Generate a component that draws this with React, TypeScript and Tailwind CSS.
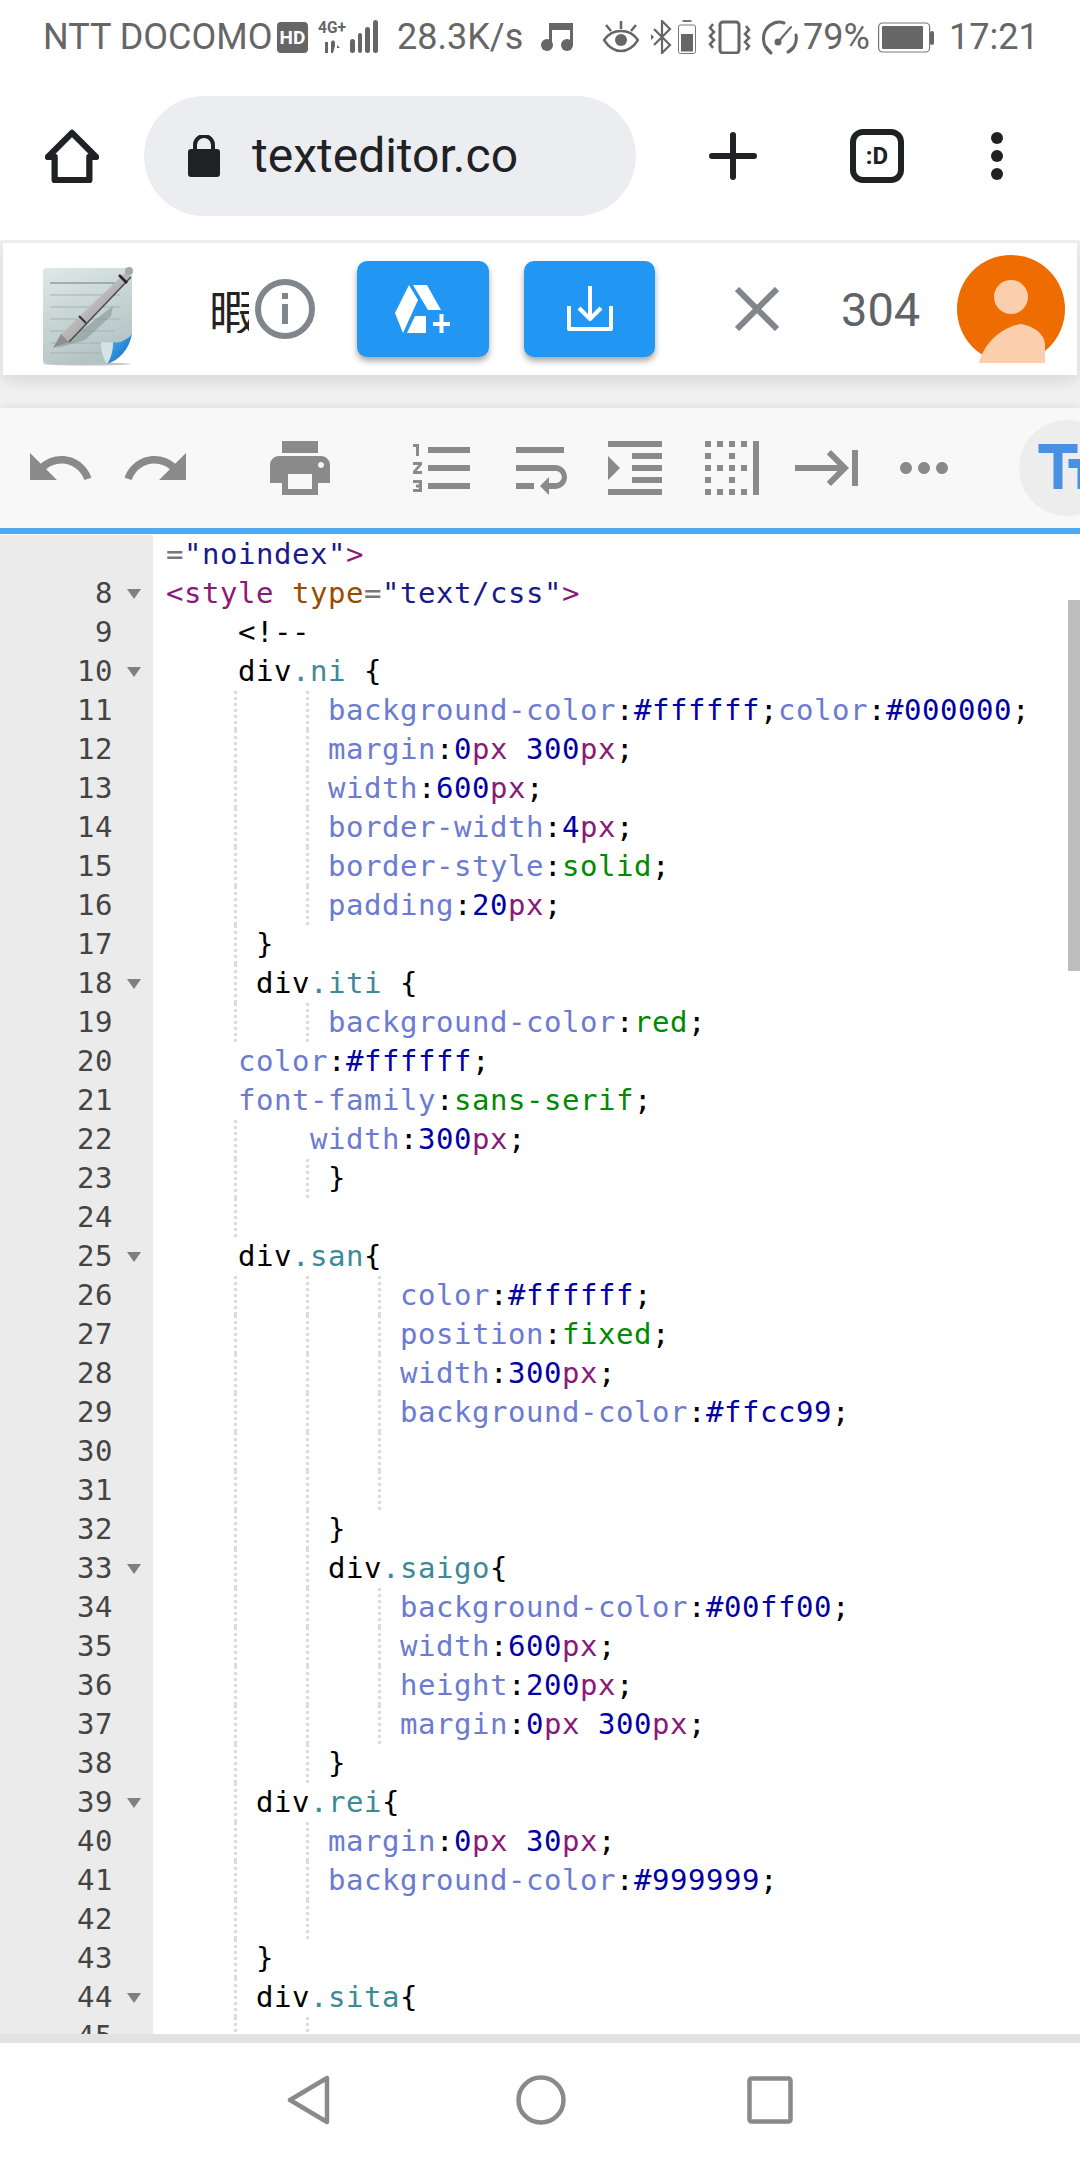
const tone = {
  t: "text-black",
  p: "text-[#6b7bd2]",
  n: "text-[#0000a6]",
  u: "text-[#881a78]",
  g: "text-[#008a00]",
  c: "text-[#3c8a98]",
  m: "text-[#8a1a7a]",
  a: "text-[#994c00]",
  s: "text-[#1a1a8c]",
  e: "text-[#777777]",
}

type Tok = [keyof typeof tone, string]

type Line = {
  num?: number
  fold?: boolean
  guides?: number[]
  toks?: Tok[]
}

const sp = (n: number) => " ".repeat(n)

// prop:value; with the usual colours
function decl(indent: number, prop: string, ...val: Tok[]): Tok[] {
  return [["t", sp(indent)], ["p", prop], ["t", ":"], ...val, ["t", ";"]]
}

function sel(indent: number, cls: string, tail = "{"): Tok[] {
  return [["t", sp(indent) + "div"], ["c", "." + cls], ["t", tail]]
}

const lines: Line[] = [
  { toks: [["e", "="], ["s", '"noindex"'], ["m", ">"]] },
  { num: 8, fold: true, toks: [["m", "<style"], ["t", " "], ["a", "type"], ["e", "="], ["s", '"text/css"'], ["m", ">"]] },
  { num: 9, toks: [["t", sp(4) + "<!--"]] },
  { num: 10, fold: true, toks: sel(4, "ni", " {") },
  { num: 11, guides: [4, 8], toks: [...decl(9, "background-color", ["n", "#ffffff"]), ["p", "color"], ["t", ":"], ["n", "#000000"], ["t", ";"]] },
  { num: 12, guides: [4, 8], toks: decl(9, "margin", ["n", "0"], ["u", "px"], ["t", " "], ["n", "300"], ["u", "px"]) },
  { num: 13, guides: [4, 8], toks: decl(9, "width", ["n", "600"], ["u", "px"]) },
  { num: 14, guides: [4, 8], toks: decl(9, "border-width", ["n", "4"], ["u", "px"]) },
  { num: 15, guides: [4, 8], toks: decl(9, "border-style", ["g", "solid"]) },
  { num: 16, guides: [4, 8], toks: decl(9, "padding", ["n", "20"], ["u", "px"]) },
  { num: 17, guides: [4], toks: [["t", sp(5) + "}"]] },
  { num: 18, fold: true, guides: [4], toks: sel(5, "iti", " {") },
  { num: 19, guides: [4, 8], toks: decl(9, "background-color", ["g", "red"]) },
  { num: 20, toks: decl(4, "color", ["n", "#ffffff"]) },
  { num: 21, toks: decl(4, "font-family", ["g", "sans-serif"]) },
  { num: 22, guides: [4], toks: decl(8, "width", ["n", "300"], ["u", "px"]) },
  { num: 23, guides: [4, 8], toks: [["t", sp(9) + "}"]] },
  { num: 24, guides: [4] },
  { num: 25, fold: true, toks: sel(4, "san") },
  { num: 26, guides: [4, 8, 12], toks: decl(13, "color", ["n", "#ffffff"]) },
  { num: 27, guides: [4, 8, 12], toks: decl(13, "position", ["g", "fixed"]) },
  { num: 28, guides: [4, 8, 12], toks: decl(13, "width", ["n", "300"], ["u", "px"]) },
  { num: 29, guides: [4, 8, 12], toks: decl(13, "background-color", ["n", "#ffcc99"]) },
  { num: 30, guides: [4, 8, 12] },
  { num: 31, guides: [4, 8, 12] },
  { num: 32, guides: [4, 8], toks: [["t", sp(9) + "}"]] },
  { num: 33, fold: true, guides: [4, 8], toks: sel(9, "saigo") },
  { num: 34, guides: [4, 8, 12], toks: decl(13, "background-color", ["n", "#00ff00"]) },
  { num: 35, guides: [4, 8, 12], toks: decl(13, "width", ["n", "600"], ["u", "px"]) },
  { num: 36, guides: [4, 8, 12], toks: decl(13, "height", ["n", "200"], ["u", "px"]) },
  { num: 37, guides: [4, 8, 12], toks: decl(13, "margin", ["n", "0"], ["u", "px"], ["t", " "], ["n", "300"], ["u", "px"]) },
  { num: 38, guides: [4, 8], toks: [["t", sp(9) + "}"]] },
  { num: 39, fold: true, guides: [4], toks: sel(5, "rei") },
  { num: 40, guides: [4, 8], toks: decl(9, "margin", ["n", "0"], ["u", "px"], ["t", " "], ["n", "30"], ["u", "px"]) },
  { num: 41, guides: [4, 8], toks: decl(9, "background-color", ["n", "#999999"]) },
  { num: 42, guides: [4, 8] },
  { num: 43, guides: [4], toks: [["t", sp(5) + "}"]] },
  { num: 44, fold: true, guides: [4], toks: sel(5, "sita") },
  { num: 45, guides: [4, 8] },
]

const guideLeft: Record<number, string> = {
  4: "left-[68px]",
  8: "left-[140px]",
  12: "left-[212px]",
}

function MaterialIcon({ d, className }: { d: string; className: string }) {
  return (
    <svg viewBox="0 0 24 24" className={className} fill="currentColor">
      <path d={d} />
    </svg>
  )
}

function StatusBar() {
  return (
    <div className="flex h-[60px] shrink-0 items-center pt-[14px] text-[36px] text-[#666666]">
      <span className="ml-[43px] w-[234px] shrink-0 leading-none">NTT DOCOMO</span>
      <div className="flex h-[31px] w-[31px] shrink-0 items-center justify-center rounded-[4px] bg-[#666666] text-[19px] font-bold leading-none text-white">
        HD
      </div>
      {/* 4G+ and signal bars */}
      <svg width="62" height="34" viewBox="0 0 62 34" className="ml-[9px] shrink-0" fill="#666666">
        <text x="1" y="13" fontSize="17" fontWeight="700" fontFamily="Roboto" textLength="28" lengthAdjust="spacingAndGlyphs">4G+</text>
        <path d="M8 22h3v11H8zM14 22l2-2 2 2v4l-2 7h-2zM20 25l3 3h-3z" />
        <rect x="33" y="19" width="5" height="14" rx="2.5" />
        <rect x="41" y="13" width="4" height="20" rx="2" />
        <rect x="48" y="7" width="5" height="26" rx="2.5" />
        <rect x="56" y="0" width="5" height="33" rx="2.5" />
      </svg>
      <span className="ml-[18px] w-[123px] shrink-0 leading-none">28.3K/s</span>
      {/* music */}
      <svg width="32" height="28" viewBox="0 0 32 28" className="ml-[21px] shrink-0" fill="#666666">
        <path d="M8 0h24v22h-3V7H11v15H8z" />
        <circle cx="6" cy="22" r="6" />
        <circle cx="26" cy="22" r="6" />
      </svg>
      {/* eye */}
      <svg width="36" height="32" viewBox="0 0 36 32" className="ml-[30px] shrink-0" fill="none" stroke="#666666" strokeWidth="2.5">
        <path d="M1 19c5-7 10-9 17-9s12 2 17 9c-5 8-10 11-17 11S6 27 1 19z" />
        <circle cx="18" cy="19" r="6" fill="#666666" stroke="none" />
        <path d="M18 0v8M3 4l5 6M33 4l-5 6" />
      </svg>
      {/* bluetooth */}
      <svg width="22" height="34" viewBox="0 0 22 34" className="ml-[12px] shrink-0" fill="none" stroke="#666666" strokeWidth="2.2">
        <path d="M3 9l16 16-8 8V1l8 8L3 25" />
        <path d="M0 14l3 3-3 3z" fill="#666666" stroke="none" />
      </svg>
      {/* tiny battery */}
      <svg width="18" height="34" viewBox="0 0 18 34" className="ml-[5px] shrink-0" fill="none" stroke="#777777" strokeWidth="1">
        <rect x="5" y="0.5" width="8" height="1" fill="#666666" />
        <rect x="0.5" y="5" width="17" height="28.5" rx="2" />
        <rect x="3" y="14" width="12" height="17.5" fill="#666666" stroke="none" />
      </svg>
      {/* vibrate */}
      <svg width="43" height="34" viewBox="0 0 43 34" className="ml-[12px] shrink-0" fill="none" stroke="#666666">
        <rect x="12" y="2" width="19" height="31" rx="3" strokeWidth="3" />
        <path d="M5 4l-3 4 4 4-4 4 4 4-4 4 3 4M38 6l3 4-4 4 4 4-4 4 4 4-3 4" strokeWidth="2.5" />
      </svg>
      {/* speedometer */}
      <svg width="37" height="36" viewBox="0 0 37 36" className="ml-[10px] shrink-0" fill="none" stroke="#666666" strokeWidth="3" strokeLinecap="round">
        <path d="M9 33C1 27 0 14 8 7c5-4 10-5 15-3M29 32c5-4 7-10 6-16" />
        <path d="M5 28l5 6M27 33l5-4" />
        <path d="M18 22L30 8" strokeWidth="2" />
        <circle cx="17" cy="23" r="3.5" fill="#666666" stroke="none" />
      </svg>
      <span className="ml-[5px] w-[65px] shrink-0 leading-none">79%</span>
      {/* battery */}
      <svg width="56" height="31" viewBox="0 0 56 31" className="ml-[10px] shrink-0" fill="none" stroke="#777777" strokeWidth="1.2">
        <rect x="0.6" y="1" width="51" height="29" rx="4" />
        <rect x="4" y="4" width="41" height="23" rx="1" fill="#666666" stroke="none" />
        <rect x="52" y="9" width="4" height="14" rx="2" fill="#666666" stroke="none" />
      </svg>
      <span className="ml-[15px] shrink-0 leading-none">17:21</span>
    </div>
  )
}

function BrowserBar() {
  return (
    <div className="flex h-[180px] shrink-0 items-center pt-[12px]">
      <svg width="54" height="54" viewBox="0 0 56 56" className="ml-[45px] shrink-0" fill="none" stroke="#202124" strokeWidth="6.5" strokeLinejoin="round">
        <path d="M28 4L3 29h7v24h36V29h7z" />
      </svg>
      <div className="ml-[45px] flex h-[120px] w-[492px] shrink-0 items-center rounded-[60px] bg-[#ebedf0]">
        <svg width="32" height="42" viewBox="0 0 32 42" className="ml-[44px] shrink-0" fill="#202124">
          <rect x="0" y="14" width="32" height="28" rx="3" />
          <path d="M7 15V10a9 9 0 0 1 18 0v5" fill="none" stroke="#202124" strokeWidth="4" />
        </svg>
        <span className="ml-[32px] text-[48px] leading-none text-[#202124]">texteditor.co</span>
      </div>
      <svg width="48" height="48" viewBox="0 0 48 48" className="ml-[73px] shrink-0" stroke="#202124" strokeWidth="6" strokeLinecap="round">
        <path d="M24 3v42M3 24h42" />
      </svg>
      <div className="ml-[93px] flex h-[54px] w-[54px] shrink-0 items-center justify-center rounded-[13px] border-[6px] border-[#202124] text-[24px] font-bold leading-none text-[#202124]">
        :D
      </div>
      <div className="ml-[87px] flex shrink-0 flex-col gap-[6px]">
        <div className="h-[12px] w-[12px] rounded-full bg-[#202124]" />
        <div className="h-[12px] w-[12px] rounded-full bg-[#202124]" />
        <div className="h-[12px] w-[12px] rounded-full bg-[#202124]" />
      </div>
    </div>
  )
}

function Logo() {
  return (
    <svg width="94" height="100" viewBox="0 0 94 100" className="ml-[38px] mt-[14px] shrink-0">
      <defs>
        <linearGradient id="paper" x1="0" y1="0" x2="0.4" y2="1">
          <stop offset="0" stopColor="#dfe8e8" />
          <stop offset="1" stopColor="#b4c4c4" />
        </linearGradient>
        <linearGradient id="pen" x1="0" y1="0" x2="1" y2="1">
          <stop offset="0" stopColor="#f4f4f4" />
          <stop offset="0.55" stopColor="#b0b0b0" />
          <stop offset="1" stopColor="#3c3c3c" />
        </linearGradient>
        <linearGradient id="curl" x1="0" y1="0" x2="1" y2="1">
          <stop offset="0" stopColor="#4fb8ee" />
          <stop offset="1" stopColor="#0a62c4" />
        </linearGradient>
      </defs>
      <ellipse cx="46" cy="98" rx="44" ry="1.5" fill="#c4c4c4" />
      <path d="M4 2h84a3 3 0 0 1 3 3v63L66 98H6a4 4 0 0 1-4-4V4z" fill="url(#paper)" />
      <path d="M9 17h72" stroke="#8c9c9c" strokeWidth="1.5" />
      <path d="M9 29h70M9 41h70M9 53h70M9 65h64M9 77h55M9 87h50" stroke="#a3b3b3" strokeWidth="1" />
      <path d="M16 82L46 60 72 40 70 50 44 74z" fill="#7f8c8c" opacity="0.5" />
      <path d="M91 68C86 74 78 78 72 76 72 84 70 92 66 98 78 94 88 84 91 68z" fill="url(#curl)" />
      <path d="M66 98C70 92 72 84 72 76 68 77 64 77 60 76 60 84 62 92 66 98z" fill="#d8e2e2" />
      <path d="M12 82L20 68 85 6 90 11 28 76z" fill="url(#pen)" />
      <path d="M28 76L90 11" stroke="#4a4a4a" strokeWidth="1.5" />
      <path d="M20 68L28 76 12 82z" fill="#8f8f8f" />
      <path d="M78 9l8 8" stroke="#222222" strokeWidth="2.5" />
      <path d="M38 50l7 7" stroke="#333333" strokeWidth="2" />
      <circle cx="88" cy="5" r="4" fill="#a8a8a8" />
    </svg>
  )
}

function AppPanel() {
  return (
    <div className="mx-[3px] mt-[3px] flex h-[132px] shrink-0 items-center bg-white shadow-[0_6px_14px_rgba(0,0,0,0.1)]">
      <Logo />
      <div className="ml-[74px] w-[40px] shrink-0 overflow-hidden whitespace-nowrap text-[48px] leading-none text-[#222222] [font-family:'Noto_Sans_CJK_JP',sans-serif]">
        暇
      </div>
      <svg width="60" height="60" viewBox="0 0 60 60" className="ml-[6px] shrink-0" fill="none" stroke="#80868b" strokeWidth="6">
        <circle cx="30" cy="30" r="27" />
        <rect x="27" y="25" width="6" height="20" fill="#80868b" stroke="none" />
        <rect x="27" y="14" width="6" height="6" fill="#80868b" stroke="none" />
      </svg>
      <div className="ml-[42px] flex h-[96px] w-[132px] shrink-0 items-center justify-center rounded-[10px] bg-[#2196f3] shadow-[0_4px_6px_rgba(0,0,0,0.35)]">
        <svg width="56" height="48" viewBox="0 0 56 48" fill="white">
          <path d="M14 0L0 28l8 20 15-33zM18 0h14l14 25H33zM12 48l8-17h11v17z" />
          <path d="M38 37h17v4H38zM44.5 29h4v19h-4z" />
        </svg>
      </div>
      <div className="ml-[35px] flex h-[96px] w-[131px] shrink-0 items-center justify-center rounded-[10px] bg-[#2196f3] shadow-[0_4px_6px_rgba(0,0,0,0.35)]">
        <svg width="46" height="46" viewBox="0 0 46 46" fill="none" stroke="white" strokeWidth="4" strokeLinejoin="round">
          <path d="M23 0v32M12 22l11 11 11-11" />
          <path d="M2 20v23h42V20" />
        </svg>
      </div>
      <svg width="44" height="44" viewBox="0 0 44 44" className="ml-[80px] shrink-0" stroke="#80868b" strokeWidth="6">
        <path d="M2 2l40 40M42 2L2 42" />
      </svg>
      <span className="ml-[62px] w-[81px] shrink-0 text-[47px] leading-none text-[#5f6368]">304</span>
      <svg width="108" height="108" viewBox="0 0 108 108" className="ml-[35px] shrink-0">
        <circle cx="54" cy="54" r="54" fill="#ef6c00" />
        <circle cx="54" cy="42" r="17" fill="#fbcfae" />
        <path d="M20 108V90c0-12 14-22 34-22s34 10 34 22v18z" fill="#fbcfae" clipPath="circle(54px at 54px 54px)" />
      </svg>
    </div>
  )
}

function EditToolbar() {
  return (
    <div className="mt-[33px] flex h-[120px] shrink-0 items-center overflow-hidden bg-[#f8f8f8] text-[#8a8a8a] shadow-[0_-2px_6px_rgba(0,0,0,0.06)]">
      <MaterialIcon className="ml-[24px] h-[72px] w-[72px] shrink-0" d="M12.5 8c-2.65 0-5.05.99-6.9 2.6L2 7v9h9l-3.62-3.62c1.39-1.16 3.16-1.88 5.12-1.88 3.54 0 6.55 2.31 7.6 5.5l2.37-.78C21.08 11.03 17.15 8 12.5 8z" />
      <MaterialIcon className="ml-[24px] h-[72px] w-[72px] shrink-0" d="M18.4 10.6C16.55 8.99 14.15 8 11.5 8c-4.65 0-8.58 3.03-9.96 7.22L3.9 16c1.05-3.19 4.05-5.5 7.6-5.5 1.95 0 3.73.72 5.12 1.88L13 16h9V7l-3.6 3.6z" />
      <MaterialIcon className="ml-[72px] h-[72px] w-[72px] shrink-0" d="M19 8H5c-1.66 0-3 1.34-3 3v6h4v4h12v-4h4v-6c0-1.66-1.34-3-3-3zm-3 11H8v-5h8v5zm3-7c-.55 0-1-.45-1-1s.45-1 1-1 1 .45 1 1-.45 1-1 1zm-1-9H6v4h12V3z" />
      <MaterialIcon className="ml-[71px] h-[72px] w-[72px] shrink-0" d="M2 17h2v.5H3v1h1v.5H2v1h3v-4H2v1zm1-9h1V4H2v1h1v3zm-1 3h1.8L2 13.1v.9h3v-1H3.2L5 10.9V10H2v1zm5-6v2h14V5H7zm0 14h14v-2H7v2zm0-6h14v-2H7v2z" />
      <MaterialIcon className="ml-[25px] h-[72px] w-[72px] shrink-0" d="M4 19h6v-2H4v2zM20 5H4v2h16V5zm-3 6H4v2h13.25c1.1 0 2 .9 2 2s-.9 2-2 2H15v-2l-3 3 3 3v-2h2c2.21 0 4-1.79 4-4s-1.79-4-4-4z" />
      <MaterialIcon className="ml-[23px] h-[72px] w-[72px] shrink-0" d="M3 21h18v-2H3v2zM3 8v8l4-4-4-4zm8 9h10v-2H11v2zM3 3v2h18V3H3zm8 6h10V7H11v2zm0 4h10v-2H11v2z" />
      <MaterialIcon className="ml-[25px] h-[72px] w-[72px] shrink-0" d="M7 21h2v-2H7v2zM3 5h2V3H3v2zm4 0h2V3H7v2zm0 8h2v-2H7v2zm-4 8h2v-2H3v2zm8 0h2v-2h-2v2zm-8-4h2v-2H3v2zm0-4h2v-2H3v2zm0-4h2V7H3v2zm8 8h2v-2h-2v2zm4-4h2v-2h-2v2zm4-10v18h2V3h-2zm-4 18h2v-2h-2v2zm0-16h2V3h-2v2zm-4 8h2v-2h-2v2zm0-8h2V3h-2v2zm0 4h2V7h-2v2z" />
      <MaterialIcon className="ml-[24px] h-[72px] w-[72px] shrink-0" d="M11.59 7.41L15.17 11H1v2h14.17l-3.59 3.59L13 18l6-6-6-6-1.41 1.41zM20 6v12h2V6h-2z" />
      <MaterialIcon className="ml-[24px] h-[72px] w-[72px] shrink-0" d="M6 10c-1.1 0-2 .9-2 2s.9 2 2 2 2-.9 2-2-.9-2-2-2zm12 0c-1.1 0-2 .9-2 2s.9 2 2 2 2-.9 2-2-.9-2-2-2zm-6 0c-1.1 0-2 .9-2 2s.9 2 2 2 2-.9 2-2-.9-2-2-2z" />
      <div className="ml-[59px] flex h-[96px] w-[96px] shrink-0 items-center justify-center rounded-full bg-[#ededed]">
        <MaterialIcon className="h-[72px] w-[72px] shrink-0 text-[#4a90e2]" d="M2.5 4v3h5v12h3V7h5V4h-13zm19 5h-9v3h3v7h3v-7h3V9z" />
      </div>
    </div>
  )
}

function CodeRow({ line }: { line: Line }) {
  return (
    <div className="flex h-[39px] shrink-0">
      <div className="flex w-[153px] shrink-0 items-center bg-[#ebebeb]">
        <span className="w-[113px] shrink-0 text-right text-[#444444]">{line.num}</span>
        {line.fold && (
          <svg width="14" height="10" viewBox="0 0 14 10" className="ml-[14px] shrink-0" fill="#808080">
            <path d="M0 0h14L7 10z" />
          </svg>
        )}
      </div>
      <div className="relative ml-[13px] flex-1 whitespace-pre">
        {line.guides?.map((g) => (
          <div key={g} className={`absolute inset-y-0 border-l-[3px] border-dotted border-[#dcdcdc] ${guideLeft[g]}`} />
        ))}
        <span className="relative">
          {line.toks?.map(([k, text], i) => (
            <span key={i} className={tone[k]}>
              {text}
            </span>
          ))}
        </span>
      </div>
    </div>
  )
}

function Editor() {
  return (
    <div className="relative min-h-0 flex-1 overflow-hidden border-t-[6px] border-[#4dabf5] bg-white pt-px text-[29px] leading-[39px] tracking-[0.54px] [font-family:'DejaVu_Sans_Mono',monospace]">
      {lines.map((line, i) => (
        <CodeRow key={i} line={line} />
      ))}
      {/* scrollbar thumb */}
      <div className="absolute right-0 top-[66px] h-[371px] w-[12px] bg-[#bdbdbd]" />
    </div>
  )
}

function NavBar() {
  return (
    <div className="flex h-[126px] shrink-0 items-center border-t-[9px] border-[#e2e2e2] bg-white pb-[3px]">
      <svg width="44" height="50" viewBox="0 0 44 50" className="ml-[287px] shrink-0" fill="none" stroke="#8a8a8a" strokeWidth="4.5" strokeLinejoin="round">
        <path d="M40 3v44L3 25z" />
      </svg>
      <svg width="50" height="50" viewBox="0 0 50 50" className="ml-[185px] shrink-0" fill="none" stroke="#8a8a8a" strokeWidth="4.5">
        <circle cx="25" cy="25" r="22.5" />
      </svg>
      <svg width="46" height="48" viewBox="0 0 46 48" className="ml-[181px] shrink-0" fill="none" stroke="#8a8a8a" strokeWidth="4.5">
        <rect x="2.5" y="2.5" width="41" height="43" rx="2" />
      </svg>
    </div>
  )
}

export default function App() {
  return (
    <div className="flex h-[2160px] w-[1080px] flex-col overflow-hidden bg-white [font-family:Roboto,sans-serif]">
      <StatusBar />
      <BrowserBar />
      <div className="flex h-[288px] shrink-0 flex-col bg-[#f0f0f0]">
        <AppPanel />
        <EditToolbar />
      </div>
      <Editor />
      <NavBar />
    </div>
  )
}
